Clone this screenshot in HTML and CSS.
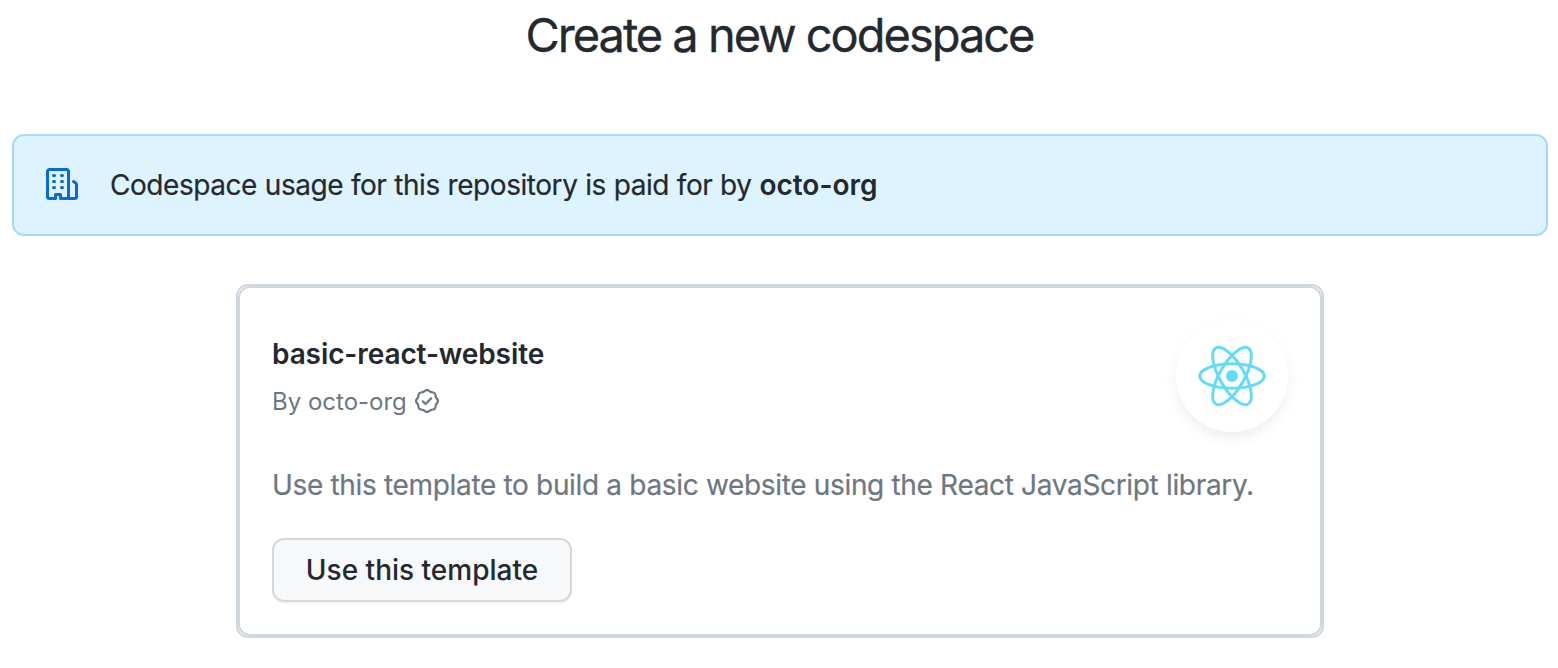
FILE: index.html
```html
<!DOCTYPE html>
<html lang="en">
<head>
<meta charset="utf-8">
<title>Create a new codespace</title>
<link rel="stylesheet" href="styles.css">
</head>
<body>
<h1 class="title"><span>Create a new codespace</span></h1>
<div class="notice">
  <svg class="org-icon" viewBox="0 0 16 16" width="32" height="32"><path fill-rule="evenodd" d="M1.5 14.25c0 .138.112.25.25.25H4v-1.25a.75.75 0 01.75-.75h2.5a.75.75 0 01.75.75v1.25h2.25a.25.25 0 00.25-.25V1.75a.25.25 0 00-.25-.25h-8.5a.25.25 0 00-.25.25v12.5zM1.75 16A1.75 1.75 0 010 14.25V1.75C0 .784.784 0 1.75 0h8.5C11.216 0 12 .784 12 1.75v12.5c0 .085-.006.168-.018.25h2.268a.25.25 0 00.25-.25V8.285a.25.25 0 00-.111-.208l-1.055-.703a.75.75 0 11.832-1.248l1.055.703c.487.325.779.871.779 1.456v5.965A1.75 1.75 0 0114.25 16h-3.5a.75.75 0 01-.197-.026c-.099.017-.2.026-.303.026h-3a.75.75 0 01-.75-.75V14h-1v1.25a.75.75 0 01-.75.75h-3zM3 3.75A.75.75 0 013.75 3h.5a.75.75 0 010 1.5h-.5A.75.75 0 013 3.75zM3.75 6a.75.75 0 000 1.5h.5a.75.75 0 000-1.5h-.5zM3 9.75A.75.75 0 013.75 9h.5a.75.75 0 010 1.5h-.5A.75.75 0 013 9.75zM7.75 9a.75.75 0 000 1.5h.5a.75.75 0 000-1.5h-.5zM7 6.75A.75.75 0 017.75 6h.5a.75.75 0 010 1.5h-.5A.75.75 0 017 6.75zM7.75 3a.75.75 0 000 1.5h.5a.75.75 0 000-1.5h-.5z"/></svg>
  <p class="notice-text">Codespace usage for this repository is paid for by <b class="org">octo-org</b></p>
</div>
<main class="frame">
<div class="card">
  <div class="head">
    <div>
      <h2 class="name"><span>basic-react-website</span></h2>
      <div class="by"><span class="by-text">By octo-org</span>
      <svg viewBox="0 0 16 16" width="24" height="24"><path fill-rule="evenodd" d="M9.585.52a2.678 2.678 0 00-3.17 0l-.928.68a1.178 1.178 0 01-.518.215L3.83 1.59a2.678 2.678 0 00-2.24 2.24l-.175 1.14a1.178 1.178 0 01-.215.518l-.68.928a2.678 2.678 0 000 3.17l.68.928c.113.153.186.33.215.518l.175 1.138a2.678 2.678 0 002.24 2.24l1.138.175c.187.029.365.102.518.215l.928.68a2.678 2.678 0 003.17 0l.928-.68a1.17 1.17 0 01.518-.215l1.138-.175a2.678 2.678 0 002.241-2.241l.175-1.138c.029-.187.102-.365.215-.518l.68-.928a2.678 2.678 0 000-3.17l-.68-.928a1.179 1.179 0 01-.215-.518L14.41 3.83a2.678 2.678 0 00-2.24-2.24l-1.138-.175a1.179 1.179 0 01-.518-.215L9.585.52zM7.303 1.728c.415-.305.98-.305 1.394 0l.928.68c.348.256.752.423 1.18.489l1.136.174c.51.078.909.478.987.987l.174 1.137c.066.427.233.831.489 1.18l.68.927c.305.415.305.98 0 1.394l-.68.928a2.678 2.678 0 00-.489 1.18l-.174 1.136a1.178 1.178 0 01-.987.987l-1.137.174a2.678 2.678 0 00-1.18.489l-.927.68c-.415.305-.98.305-1.394 0l-.928-.68a2.678 2.678 0 00-1.18-.489l-1.136-.174a1.178 1.178 0 01-.987-.987l-.174-1.137a2.678 2.678 0 00-.489-1.18l-.68-.927a1.178 1.178 0 010-1.394l.68-.928c.256-.348.423-.752.489-1.18l.174-1.136c.078-.51.478-.909.987-.987l1.137-.174a2.678 2.678 0 001.18-.489l.927-.68zM11.28 6.78a.75.75 0 00-1.06-1.06L7 8.94 5.78 7.72a.75.75 0 00-1.06 1.06l1.75 1.75a.75.75 0 001.06 0l3.75-3.75z"/></svg></div>
    </div>
    <div class="logo">
      <svg class="react" viewBox="-11.5 -10.232 23 20.463" width="68" height="60"><circle r="2.05" fill="#61dafb"/><g stroke="#61dafb" fill="none"><ellipse rx="11" ry="4.2"/><ellipse rx="11" ry="4.2" transform="rotate(60)"/><ellipse rx="11" ry="4.2" transform="rotate(120)"/></g></svg>
    </div>
  </div>
  <p class="desc"><span>Use this template to build a basic website using the React JavaScript library.</span></p>
  <button class="button"><span>Use this template</span></button>
</div>
</main>
</body>
</html>
```
FILE: styles.css
```css
* { box-sizing: border-box; }
body { margin: 0; padding: 0 10px 0 12px; height: 668px; background: #fff; color: #24292f; font-family: Inter, "Liberation Sans", sans-serif; white-space: nowrap; }
h1, h2, p { margin: 0; }
.title { height: 134px; padding-right: 1px; text-align: center; font-size: 47px; line-height: 69px; font-weight: 400; letter-spacing: -2.03px; -webkit-text-stroke: .3px #24292f; }
.notice { height: 102px; padding: 0 32px; display: flex; align-items: center; gap: 32px; background: #ddf4ff; border: 2px solid #a5d9ff; border-radius: 12px; font-size: 28px; }
.org-icon { fill: #0969da; margin-bottom: 2px; }
.notice-text { letter-spacing: -.44px; word-spacing: .35px; -webkit-text-stroke: .2px #24292f; }
.org { font-weight: 600; letter-spacing: 0; -webkit-text-stroke: 0; }
.frame { width: 1088px; height: 354px; margin: 48px auto 0; border: 2px solid #d0d7de; border-radius: 12px; }
.card { height: 350px; padding: 32px; border: 2px solid #d0d7de; border-radius: 12px; }
.head { display: flex; justify-content: space-between; height: 144px; }
.name { margin-top: 13px; font-size: 28px; line-height: 42px; font-weight: 600; letter-spacing: -.1px; }
.by { display: flex; align-items: center; gap: 8px; height: 36px; margin-top: 8px; color: #6e7781; fill: #6e7781; font-size: 24px; }
.logo { display: flex; align-items: center; justify-content: center; width: 112px; height: 112px; border-radius: 50%; box-shadow: 0 6px 12px rgba(140,149,159,.15); }
.react { overflow: visible; }
.desc { font-size: 28px; line-height: 42px; letter-spacing: -.33px; color: #6e7781; -webkit-text-stroke: .2px #6e7781; }
.button { display: flex; align-items: center; justify-content: center; width: 300px; height: 64px; margin-top: 32px; padding: 0; border: 2px solid #d5d8da; border-radius: 12px; background: #f6f8fa; box-shadow: 0 2px 0 rgba(27,31,36,.04); color: #24292f; font: 500 28px Inter, sans-serif; }
```
